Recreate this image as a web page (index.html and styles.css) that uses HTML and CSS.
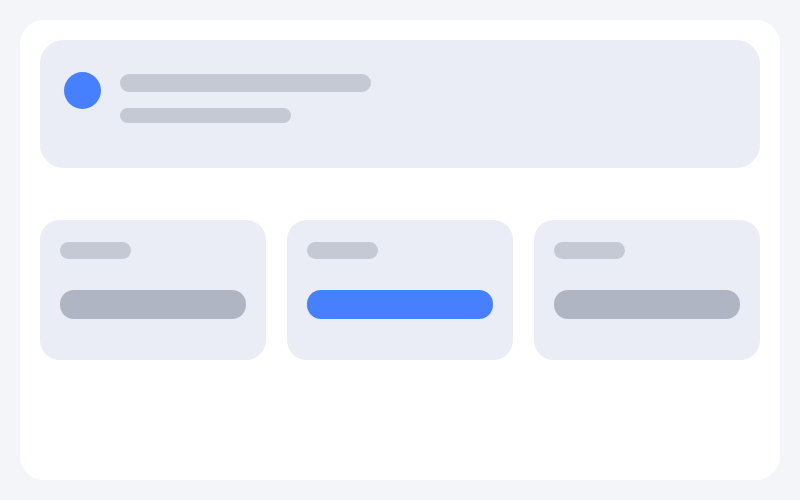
FILE: index.html
```html
<!DOCTYPE html>
<html lang="en">
<head>
  <meta charset="UTF-8">
  <meta name="viewport" content="width=device-width, initial-scale=1.0">
  <title>Loading</title>
  <link rel="stylesheet" href="styles.css">
</head>
<body>
  <div class="panel">
    <div class="profile">
      <div class="avatar"></div>
      <div class="profile-lines">
        <div class="line line-title"></div>
        <div class="line line-sub"></div>
      </div>
    </div>

    <div class="cards">
      <div class="card">
        <div class="label"></div>
        <div class="bar"></div>
      </div>
      <div class="card">
        <div class="label"></div>
        <div class="bar bar-active"></div>
      </div>
      <div class="card">
        <div class="label"></div>
        <div class="bar"></div>
      </div>
    </div>
  </div>
</body>
</html>
```

FILE: styles.css
```css
body {
  font-family: 'Liberation Sans', Arial, sans-serif;
  margin: 0;
  padding: 20px;
  background-color: #f4f5f9;
}

.panel {
  height: 460px;
  box-sizing: border-box;
  background-color: #ffffff;
  border-radius: 24px;
  padding: 20px;
}

.profile {
  display: flex;
  align-items: flex-start;
  gap: 19px;
  height: 128px;
  box-sizing: border-box;
  padding: 32px 24px;
  background-color: #eaedf5;
  border-radius: 24px;
}

.avatar {
  width: 37px;
  height: 37px;
  border-radius: 50%;
  background-color: #4680ff;
}

.profile-lines {
  display: flex;
  flex-direction: column;
  gap: 16px;
  padding-top: 2px;
}

.line {
  background-color: #c4c9d4;
  border-radius: 9px;
}

.line-title {
  width: 251px;
  height: 18px;
}

.line-sub {
  width: 171px;
  height: 15px;
}

.cards {
  display: flex;
  gap: 21px;
  margin-top: 52px;
}

.card {
  flex: 1;
  height: 140px;
  box-sizing: border-box;
  padding: 22px 20px;
  background-color: #eaedf5;
  border-radius: 20px;
}

.label {
  width: 71px;
  height: 17px;
  background-color: #c4c9d4;
  border-radius: 9px;
}

.bar {
  height: 29px;
  margin-top: 31px;
  background-color: #afb5c3;
  border-radius: 14px;
}

.bar-active {
  background-color: #4680ff;
}
```
